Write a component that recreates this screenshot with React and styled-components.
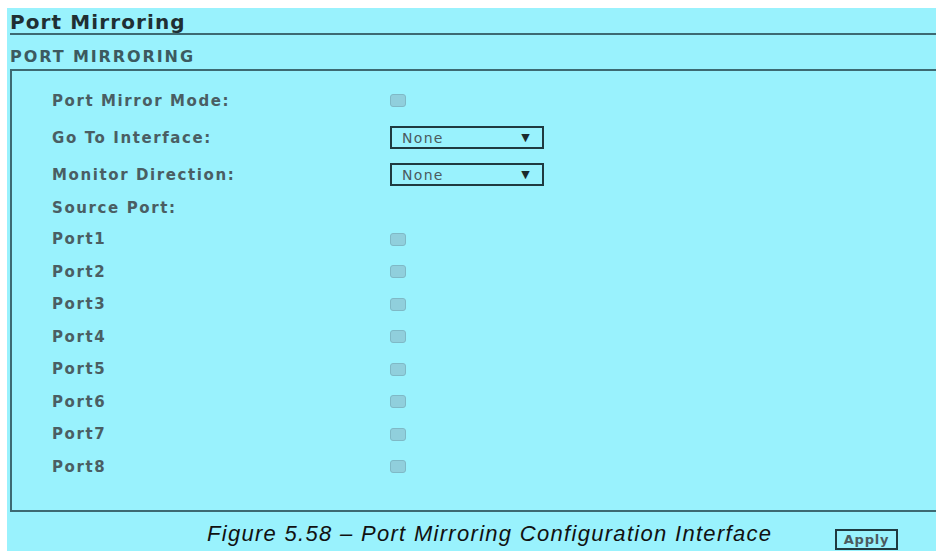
import React from 'react';
import styled, { createGlobalStyle } from 'styled-components';

const GlobalStyle = createGlobalStyle`
    html, body {
        margin: 0;
        padding: 0;
        background: #ffffff;
        overflow: hidden;
    }
`;

const Page = styled.div`
    margin: 8px 0 0 7px;
    height: 543px;
    background: #99f2fd;
    overflow: hidden;
    font-family: "DejaVu Sans", Verdana, sans-serif;
`;

const TitleBar = styled.div`
    margin-left: 3px;
    height: 25px;
    border-bottom: 2px solid #3d6a72;
    display: flex;
    align-items: flex-end;
`;

const Title = styled.h1`
    margin: 0;
    font-size: 20px;
    font-weight: bold;
    letter-spacing: 1.1px;
    color: #1f2f33;
    line-height: 22px;
`;

const SectionTitle = styled.h2`
    margin: 0 0 0 3px;
    height: 34px;
    display: flex;
    align-items: flex-end;
    padding-bottom: 3px;
    box-sizing: border-box;
    font-size: 16px;
    font-weight: bold;
    letter-spacing: 1.9px;
    color: #3c5a60;
`;

const Box = styled.div`
    margin: 0 -10px 0 3px;
    border-left: 2px solid #3d6a72;
    border-top: 2px solid #3d6a72;
    border-bottom: 2px solid #3d6a72;
    padding: 11px 0 27px 40px;
    display: flex;
    flex-direction: column;
`;

const Row = styled.div`
    height: ${props => props.$h}px;
    display: grid;
    grid-template-columns: 338px 1fr;
    align-items: center;
`;

const Label = styled.span`
    font-size: 15px;
    font-weight: bold;
    color: #4a5e63;
    letter-spacing: 1.6px;
`;

const Check = styled.span`
    width: 14px;
    height: 11px;
    border: 1px solid #7fb9c6;
    border-radius: 3px;
    background: #90cfdc;
`;

const Select = styled.div`
    width: 154px;
    height: 23px;
    box-sizing: border-box;
    border: 2px solid #1f3a40;
    display: flex;
    align-items: center;
    justify-content: space-between;
    padding: 0 11px 0 10px;
    font-size: 14px;
    letter-spacing: 1.3px;
    color: #4b5a5e;
`;

const Arrow = styled.span`
    font-size: 11px;
    color: #1a2a2e;
`;

const Footer = styled.div`
    height: 39px;
    display: flex;
    align-items: flex-end;
    padding-left: 200px;
`;

const Caption = styled.span`
    font-family: "Liberation Sans", Arial, sans-serif;
    font-style: italic;
    font-size: 22px;
    letter-spacing: 1.3px;
    line-height: 26px;
    margin-bottom: 4px;
    color: #111;
    width: 628px;
`;

const ApplyButton = styled.button`
    width: 63px;
    height: 21px;
    padding: 0;
    margin-bottom: 1px;
    border: 2px solid #1f3a40;
    background: transparent;
    font-family: "DejaVu Sans", Verdana, sans-serif;
    font-size: 13px;
    font-weight: bold;
    letter-spacing: 0.8px;
    line-height: 15px;
    color: #4b5a5e;
`;

const ports = ['Port1', 'Port2', 'Port3', 'Port4', 'Port5', 'Port6', 'Port7', 'Port8'];

const DropDown = () => (
    <Select>
        <span>None</span>
        <Arrow>▼</Arrow>
    </Select>
);

const App = () => {
    return (
        <Page>
            <GlobalStyle />
            <TitleBar>
                <Title>Port Mirroring</Title>
            </TitleBar>
            <SectionTitle>PORT MIRRORING</SectionTitle>
            <Box>
                <Row $h={37}>
                    <Label>Port Mirror Mode:</Label>
                    <Check />
                </Row>
                <Row $h={37}>
                    <Label>Go To Interface:</Label>
                    <DropDown />
                </Row>
                <Row $h={37}>
                    <Label>Monitor Direction:</Label>
                    <DropDown />
                </Row>
                <Row $h={30}>
                    <Label>Source Port:</Label>
                </Row>
                {ports.map(p => (
                    <Row key={p} $h={32.5}>
                        <Label>{p}</Label>
                        <Check />
                    </Row>
                ))}
            </Box>
            <Footer>
                <Caption>Figure 5.58 – Port Mirroring Configuration Interface</Caption>
                <ApplyButton>Apply</ApplyButton>
            </Footer>
        </Page>
    );
};

export default App;
